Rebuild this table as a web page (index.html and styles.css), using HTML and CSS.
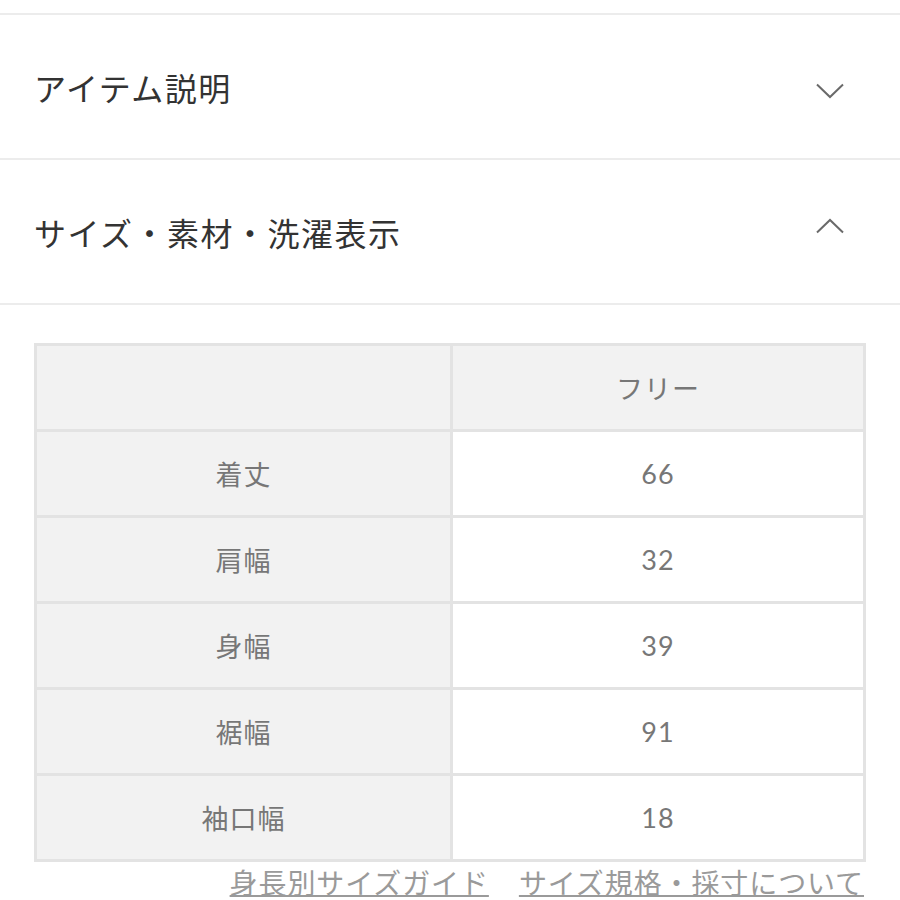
FILE: index.html
```html
<!DOCTYPE html>
<html lang="ja">
<head>
<meta charset="utf-8">
<link rel="stylesheet" href="styles.css">
</head>
<body>
<div class="page">
  <div class="acc">
    <div class="acc-head">
      <span class="acc-title">アイテム説明</span>
      <svg class="chev chev-down" width="28" height="16" viewBox="0 0 28 16"><path d="M1 1.5 L14 14 L27 1.5" fill="none" stroke="#6a6a6a" stroke-width="2"/></svg>
    </div>
    <div class="acc-head">
      <span class="acc-title">サイズ・素材・洗濯表示</span>
      <svg class="chev chev-up" width="28" height="16" viewBox="0 0 28 16"><path d="M1 14.5 L14 2 L27 14.5" fill="none" stroke="#6a6a6a" stroke-width="2"/></svg>
    </div>
  </div>
  <div class="content">
    <table class="size-table">
      <tr class="head-row"><td class="label"></td><td class="val">フリー</td></tr>
      <tr><td class="label">着丈</td><td class="val">66</td></tr>
      <tr><td class="label">肩幅</td><td class="val">32</td></tr>
      <tr><td class="label">身幅</td><td class="val">39</td></tr>
      <tr><td class="label">裾幅</td><td class="val">91</td></tr>
      <tr><td class="label">袖口幅</td><td class="val">18</td></tr>
    </table>
    <div class="links">
      <a class="link" href="#">身長別サイズガイド</a>
      <a class="link" href="#">サイズ規格・採寸について</a>
    </div>
  </div>
</div>
</body>
</html>
```
FILE: styles.css
```css
html, body {
  margin: 0;
  padding: 0;
  background: #fff;
}
body {
  font-family: "Lato", "Noto Sans CJK JP", sans-serif;
  color: #333;
}
.page {
  width: 900px;
  height: 900px;
  overflow: hidden;
  padding-top: 13px;
  box-sizing: border-box;
}
.acc {
  border-top: 2px solid #ececec;
}
.acc-head {
  height: 143px;
  border-bottom: 2px solid #ececec;
  display: flex;
  align-items: center;
  justify-content: space-between;
  padding: 0 56px 0 34px;
}
.acc-title {
  font-size: 32px;
  letter-spacing: 1.5px;
  color: #333;
  font-weight: 400;
}
.chev {
  display: block;
}
.chev-down {
  margin-top: 8px;
}
.chev-up {
  margin-top: -12px;
}
.content {
  padding: 38px 34px 0 34px;
}
.size-table {
  width: 832px;
  border-collapse: collapse;
  border: 2px solid #e3e3e3;
  table-layout: fixed;
}
.size-table td {
  height: 83px;
  border: 3px solid #e3e3e3;
  text-align: center;
  vertical-align: middle;
  font-size: 27px;
  letter-spacing: 1px;
  color: #777;
  padding: 0;
}
.size-table td.label {
  background: #f2f2f2;
  width: 413px;
}
.size-table td.val {
  background: #fff;
}
.size-table .head-row td {
  background: #f2f2f2;
}
.links {
  display: flex;
  justify-content: flex-end;
  gap: 30px;
  margin-top: 6px;
  margin-right: 2px;
}
.link {
  font-size: 28px;
  letter-spacing: 0.9px;
  color: #9a9a9a;
  text-decoration: underline;
  text-decoration-thickness: 2px;
  text-underline-offset: 1px;
  line-height: 30px;
}
```
